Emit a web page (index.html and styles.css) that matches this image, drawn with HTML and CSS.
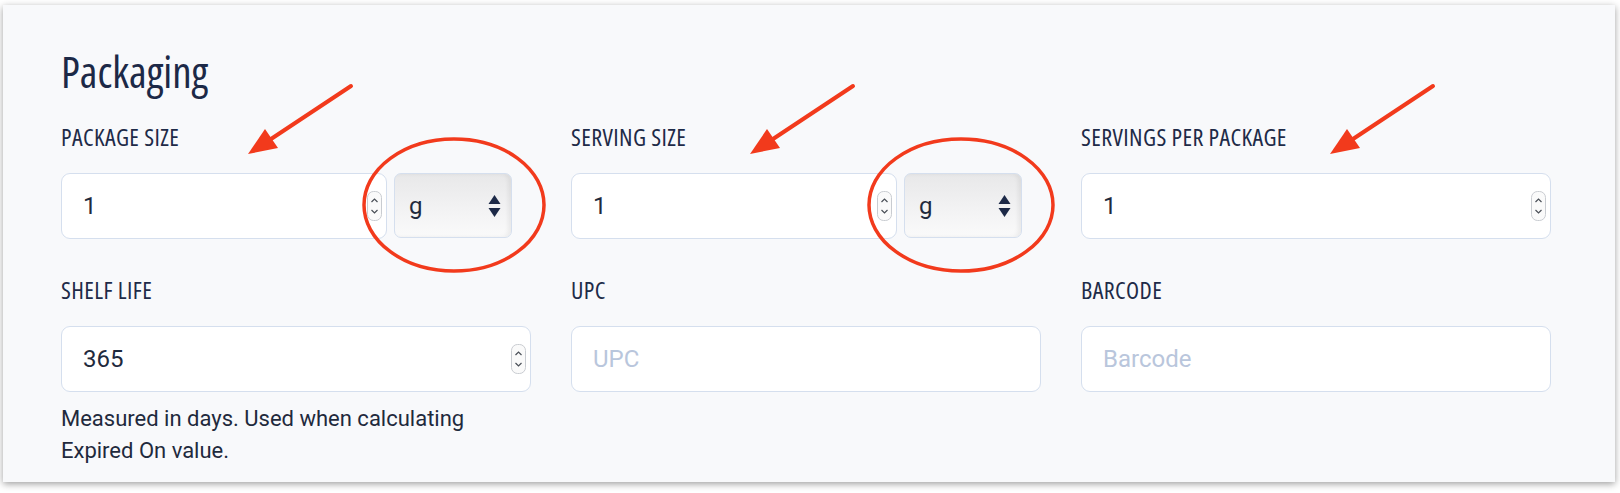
FILE: index.html
```html
<!DOCTYPE html>
<html lang="en">
<head>
<meta charset="utf-8">
<title>Packaging</title>
<link rel="stylesheet" href="styles.css">
</head>
<body>
<div class="card">
  <h2 class="title">Packaging</h2>
  <div class="grid">
    <div class="field">
      <div class="label">PACKAGE SIZE</div>
      <div class="pair">
        <div class="input short"><span class="val">1</span>
          <span class="spin"><svg width="15" height="30" viewBox="0 0 15 30"><rect x="0.5" y="0.5" width="14" height="29" rx="6" fill="#fafafa" stroke="#c9ccd1"/><path d="M4.5 11 L7.5 8 L10.5 11" fill="none" stroke="#4a4f57" stroke-width="1.2"/><path d="M4.5 19 L7.5 22 L10.5 19" fill="none" stroke="#4a4f57" stroke-width="1.2"/></svg></span>
        </div>
        <div class="select"><span class="val">g</span>
          <svg width="13" height="22" viewBox="0 0 13 22"><path d="M6.5 0 L12.5 9 L0.5 9 Z" fill="#1c2947"/><path d="M6.5 22 L12.5 13 L0.5 13 Z" fill="#1c2947"/></svg>
        </div>
      </div>
    </div>
    <div class="field">
      <div class="label">SERVING SIZE</div>
      <div class="pair">
        <div class="input short"><span class="val">1</span>
          <span class="spin"><svg width="15" height="30" viewBox="0 0 15 30"><rect x="0.5" y="0.5" width="14" height="29" rx="6" fill="#fafafa" stroke="#c9ccd1"/><path d="M4.5 11 L7.5 8 L10.5 11" fill="none" stroke="#4a4f57" stroke-width="1.2"/><path d="M4.5 19 L7.5 22 L10.5 19" fill="none" stroke="#4a4f57" stroke-width="1.2"/></svg></span>
        </div>
        <div class="select"><span class="val">g</span>
          <svg width="13" height="22" viewBox="0 0 13 22"><path d="M6.5 0 L12.5 9 L0.5 9 Z" fill="#1c2947"/><path d="M6.5 22 L12.5 13 L0.5 13 Z" fill="#1c2947"/></svg>
        </div>
      </div>
    </div>
    <div class="field">
      <div class="label">SERVINGS PER PACKAGE</div>
      <div class="input"><span class="val">1</span>
        <span class="spin"><svg width="15" height="30" viewBox="0 0 15 30"><rect x="0.5" y="0.5" width="14" height="29" rx="6" fill="#fafafa" stroke="#c9ccd1"/><path d="M4.5 11 L7.5 8 L10.5 11" fill="none" stroke="#4a4f57" stroke-width="1.2"/><path d="M4.5 19 L7.5 22 L10.5 19" fill="none" stroke="#4a4f57" stroke-width="1.2"/></svg></span>
      </div>
    </div>

    <div class="field">
      <div class="label">SHELF LIFE</div>
      <div class="input"><span class="val">365</span>
        <span class="spin"><svg width="15" height="30" viewBox="0 0 15 30"><rect x="0.5" y="0.5" width="14" height="29" rx="6" fill="#fafafa" stroke="#c9ccd1"/><path d="M4.5 11 L7.5 8 L10.5 11" fill="none" stroke="#4a4f57" stroke-width="1.2"/><path d="M4.5 19 L7.5 22 L10.5 19" fill="none" stroke="#4a4f57" stroke-width="1.2"/></svg></span>
      </div>
      <p class="help">Measured in days. Used when calculating<br>Expired On value.</p>
    </div>
    <div class="field">
      <div class="label">UPC</div>
      <div class="input"><span class="ph">UPC</span></div>
    </div>
    <div class="field">
      <div class="label">BARCODE</div>
      <div class="input"><span class="ph">Barcode</span></div>
    </div>
  </div>
</div>

<svg class="annot" width="1620" height="493" viewBox="0 0 1620 493">
  <defs>
    <g id="arrow">
      <line x1="351" y1="86" x2="268" y2="141" stroke="#f23a1c" stroke-width="4" stroke-linecap="round"/>
      <path d="M248 154 L265 129 L278 148 Z" fill="#f23a1c"/>
    </g>
  </defs>
  <use href="#arrow"/>
  <use href="#arrow" transform="translate(502,0)"/>
  <use href="#arrow" transform="translate(1082,0)"/>
  <ellipse cx="454" cy="205" rx="90" ry="66" fill="none" stroke="#f23a1c" stroke-width="3.5"/>
  <ellipse cx="961" cy="205" rx="92" ry="66" fill="none" stroke="#f23a1c" stroke-width="3.5"/>
</svg>
</body>
</html>
```

FILE: styles.css
```css
* {
  box-sizing: border-box;
}

body {
  margin: 0;
  width: 1620px;
  height: 493px;
  overflow: hidden;
  position: relative;
  background: #ffffff;
  font-family: Roboto, "Liberation Sans", sans-serif;
}

.card {
  margin: 5px 0 0 3px;
  width: 1612px;
  height: 477px;
  background: #f8f9fb;
  box-shadow: 0 2px 7px rgba(0, 0, 0, 0.38);
  padding: 43px 0 0 58px;
}

.title {
  margin: 0;
  font-family: "Open Sans", sans-serif;
  font-stretch: 78%;
  font-weight: 400;
  font-size: 43px;
  line-height: 48px;
  letter-spacing: 0;
  color: #1c2947;
}

.grid {
  display: grid;
  grid-template-columns: repeat(3, 470px);
  column-gap: 40px;
  row-gap: 38px;
  margin-top: 28px;
}

.label {
  font-family: "Open Sans", sans-serif;
  font-stretch: 85%;
  font-weight: 500;
  font-size: 24px;
  line-height: 26px;
  letter-spacing: 0.4px;
  color: #1e2b48;
  margin-bottom: 23px;
}

.pair {
  display: flex;
  gap: 7px;
}

.input {
  height: 66px;
  background: #ffffff;
  border: 1px solid #d5dfee;
  border-radius: 9px;
  display: flex;
  align-items: center;
  justify-content: space-between;
  padding: 0 4px 0 21px;
  font-size: 24px;
  color: #1f2a3d;
}

.input.short {
  width: 326px;
}

.spin {
  display: flex;
}

.ph {
  color: #b9c6dc;
}

.select {
  width: 118px;
  height: 65px;
  border: 1px solid #d5dfee;
  border-radius: 7px;
  background: linear-gradient(#e8e8e9, #f3f3f4 60%, #fafafa);
  box-shadow: inset -3px 0 4px rgba(0, 0, 0, 0.06);
  display: flex;
  align-items: center;
  justify-content: space-between;
  padding: 0 10px 0 14px;
  font-size: 24px;
  color: #1f2a3d;
}

.select svg {
  display: block;
}

.help {
  margin: 11px 0 0;
  font-size: 22px;
  line-height: 32px;
  color: #1f2a3d;
}

.annot {
  position: absolute;
  left: 0;
  top: 0;
  pointer-events: none;
}
```
